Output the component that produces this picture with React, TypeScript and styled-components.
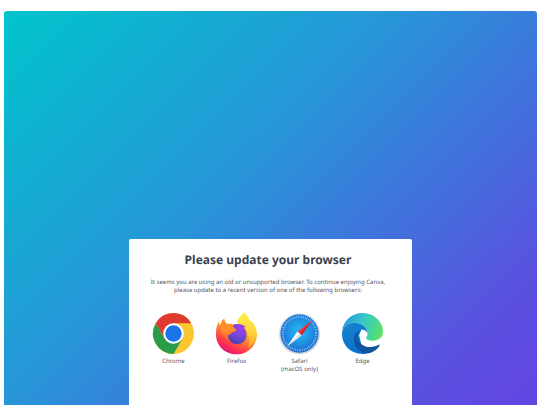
import React from "react";
import styled, { createGlobalStyle } from "styled-components";

const GlobalStyle = createGlobalStyle`
  * { box-sizing: border-box; }
  body {
    margin: 0;
    background: #fff;
    font-family: "Noto Sans", "Open Sans", sans-serif;
    text-rendering: geometricPrecision;
  }
`;

const Page = styled.div`
  display: flex;
  min-height: 100vh;
  padding: 11px 3px 0 4px;
`;

const Backdrop = styled.main`
  flex: 1;
  display: flex;
  flex-direction: column;
  justify-content: flex-end;
  align-items: center;
  border-radius: 3px 3px 0 0;
  background: linear-gradient(135deg, #00c4cc 0%, #2796d8 42%, #3a7bdb 59%, #5a50df 86%, #6445e3 100%);
`;

const Card = styled.section`
  width: 53%;
  min-width: 282px;
  padding: 12px 20px 32px 15px;
  border-radius: 2px 2px 0 0;
  background: #fff;
  text-align: center;
`;

const Title = styled.h1`
  margin: 0;
  color: #3b4250;
  font-size: 12px;
  line-height: 18px;
  font-weight: 700;
`;

const Message = styled.p`
  margin: 9px 0 0;
  color: #4e535d;
  font-size: 6px;
  line-height: 8px;
`;

const BrowserList = styled.ul`
  display: flex;
  justify-content: center;
  gap: 3px;
  margin: 19px 0 0;
  padding: 0;
  list-style: none;
`;

const BrowserLink = styled.a`
  display: flex;
  flex-direction: column;
  align-items: center;
  width: 60px;
  color: #53575f;
  font-size: 6px;
  line-height: 8px;
  text-decoration: none;
`;

const Icon = styled.svg`
  display: block;
  width: 41px;
  height: 41px;
  margin-bottom: 3px;
  overflow: visible;
`;

const ChromeIcon = () => (
  <Icon viewBox="0 0 120 120" aria-hidden="true">
    <circle cx="60" cy="60" r="60" fill="#fbc62f" />
    <path d="M60 30H112A60 60 0 0 0 8 30L34 75 60 60Z" fill="#df3a2f" />
    <path d="M8 30A60 60 0 0 0 60 120L86 75 60 60 34 75Z" fill="#2b9c4a" />
    <circle cx="60" cy="60" r="30" fill="#fff" />
    <circle cx="60" cy="60" r="24" fill="#1b73e8" />
  </Icon>
);

const FirefoxIcon = () => (
  <Icon viewBox="0 0 120 120" aria-hidden="true">
    <defs>
      <linearGradient id="ff-body" x1="0.85" y1="0.1" x2="0.3" y2="0.95">
        <stop offset="0" stopColor="#fff04a" />
        <stop offset="0.3" stopColor="#ffb72e" />
        <stop offset="0.6" stopColor="#ff6b35" />
        <stop offset="0.82" stopColor="#ff3054" />
        <stop offset="1" stopColor="#e8196f" />
      </linearGradient>
      <linearGradient id="ff-flame" x1="0.4" y1="0" x2="0.5" y2="1">
        <stop offset="0" stopColor="#fff14f" />
        <stop offset="0.6" stopColor="#ffd33a" />
        <stop offset="1" stopColor="#ffa031" />
      </linearGradient>
      <linearGradient id="ff-fox" x1="0.4" y1="0" x2="0.5" y2="1">
        <stop offset="0" stopColor="#ff8a28" />
        <stop offset="0.5" stopColor="#ff8f2b" />
        <stop offset="1" stopColor="#ff563c" />
      </linearGradient>
      <radialGradient id="ff-globe" cx="0.7" cy="0.2" r="0.9">
        <stop offset="0" stopColor="#a43bec" />
        <stop offset="0.5" stopColor="#7548da" />
        <stop offset="1" stopColor="#493eab" />
      </radialGradient>
    </defs>
    <path
      d="M9 22C8 29 9 33 12 36 14 28 18 22 24 17 24 24 28 29 32 32 37 31 43 32 48 34L62 33 90 34 104 25C114 36 120 48 120 63 119 96 93 121 60 121 27 121 0 96 0 63 0 46 3 33 9 22Z"
      fill="url(#ff-body)"
    />
    <path
      d="M79-3C91 4 97 15 99 23L102 22C118 39 122 62 113 81 108 91 101 98 94 102 100 84 98 60 86 46 77 37 63 34 62 25 61 16 75 10 79-3Z"
      fill="url(#ff-flame)"
    />
    <path
      d="M61 32Q77 31 87 40L81 43Q89 50 89 65C89 80 77 91 62 91 47 91 35 80 35 65 35 46 45 33 61 32Z"
      fill="url(#ff-globe)"
    />
    <path
      d="M24 17C24 24 28 29 32 32 39 31 46 32 50 36 51 42 54 46 60 49 57 56 50 54 45 59 41 62 41 68 36 64 33 70 37 77 41 82 27 77 15 64 12 40 14 30 18 22 24 17Z"
      fill="url(#ff-fox)"
    />
  </Icon>
);

const SafariIcon = () => (
  <Icon viewBox="0 0 120 120" aria-hidden="true">
    <defs>
      <linearGradient id="sf-rim" x1="0" y1="0" x2="0" y2="1">
        <stop offset="0" stopColor="#f0f1f2" />
        <stop offset="1" stopColor="#d0d5da" />
      </linearGradient>
      <radialGradient id="sf-dial" cx="0.5" cy="0.45" r="0.6">
        <stop offset="0" stopColor="#22bdf2" />
        <stop offset="0.5" stopColor="#2094e4" />
        <stop offset="1" stopColor="#1c5fcc" />
      </radialGradient>
    </defs>
    <circle cx="60" cy="60" r="61" fill="url(#sf-rim)" />
    <circle cx="60" cy="60" r="56" fill="url(#sf-dial)" />
    <circle cx="60" cy="60" r="49" fill="none" stroke="#b9e1fa" strokeWidth="7" strokeDasharray="1.4 3.73" />
    <path d="M97 21 54 54 66 66Z" fill="#f23c3f" />
    <path d="M97 21 60 60 66 66Z" fill="#cc2537" />
    <path d="M24 97 54 54 66 66Z" fill="#fff" />
    <path d="M24 97 60 60 66 66Z" fill="#d5e0e8" />
  </Icon>
);

const EdgeIcon = () => (
  <Icon viewBox="0 0 24 24" aria-hidden="true">
    <defs>
      <linearGradient id="ed-wave" x1="0" y1="0.35" x2="1" y2="0.6">
        <stop offset="0" stopColor="#239bda" />
        <stop offset="0.4" stopColor="#35c2cf" />
        <stop offset="0.75" stopColor="#46d69b" />
        <stop offset="1" stopColor="#5fe060" />
      </linearGradient>
      <linearGradient id="ed-side" x1="0.2" y1="0" x2="0.7" y2="1">
        <stop offset="0" stopColor="#1584cf" />
        <stop offset="1" stopColor="#0870cb" />
      </linearGradient>
      <linearGradient id="ed-base" x1="0" y1="0" x2="1" y2="0.5">
        <stop offset="0" stopColor="#1453a2" />
        <stop offset="1" stopColor="#11529b" />
      </linearGradient>
    </defs>
    <path
      d="M0 11C.6 4.6 5.6 0 12 0 18.8 0 24 5.2 24 10.8 24 14.2 21.4 16.2 18.2 16.2 15.6 16.2 14.1 15.3 14.1 14.6 14.1 14.1 15 13.6 15 12 15 9 12 5.7 7.1 5.7 3.2 5.7.8 8.3 0 11Z"
      fill="url(#ed-wave)"
    />
    <path
      d="M0 11.6C.4 8.1 3.6 5.7 7.1 5.7 12 5.7 15 9 15 12 14.3 10.4 13 9.7 11.4 9.7L10 13 12 21 14.5 23.7C13.7 24 12.9 24 12 24 5.2 24-.3 18.8 0 11.6Z"
      fill="url(#ed-side)"
    />
    <path
      d="M11.4 9.7C9.5 10.7 8.9 12.2 9.1 14 9.5 18 13.4 20.2 17 19.9 19.2 19.8 20.9 18.9 21.6 18.6 22 18.5 22.2 18.8 22 19.1 20.4 21.6 17.6 23.4 14.5 23.7 10.6 23.5 7.2 19.9 7 16 6.8 12.9 8.6 10.3 11.4 9.7Z"
      fill="url(#ed-base)"
    />
  </Icon>
);

const browsers = [
  { name: "Chrome", href: "#chrome", Logo: ChromeIcon },
  { name: "Firefox", href: "#firefox", Logo: FirefoxIcon },
  { name: "Safari", note: "(macOS only)", href: "#safari", Logo: SafariIcon },
  { name: "Edge", href: "#edge", Logo: EdgeIcon },
];

export default function App() {
  return (
    <>
      <GlobalStyle />
      <Page>
        <Backdrop>
          <Card>
            <Title>Please update your browser</Title>
            <Message>
              It seems you are using an old or unsupported browser. To continue enjoying Canva,
              <br />
              please update to a recent version of one of the following browsers:
            </Message>
            <BrowserList>
              {browsers.map(({ name, note, href, Logo }) => (
                <li key={name}>
                  <BrowserLink href={href}>
                    <Logo />
                    <span>{name}</span>
                    {note && <span>{note}</span>}
                  </BrowserLink>
                </li>
              ))}
            </BrowserList>
          </Card>
        </Backdrop>
      </Page>
    </>
  );
}
